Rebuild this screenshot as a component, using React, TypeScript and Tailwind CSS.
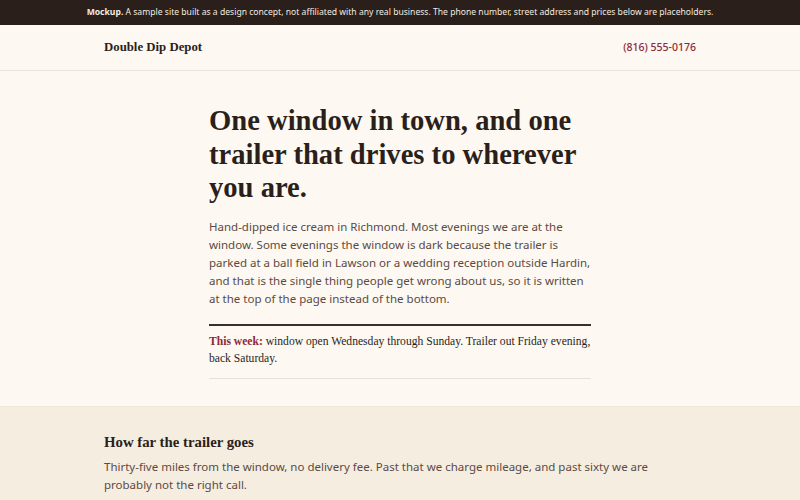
export default function App() {
  return (
    <div className="min-h-screen bg-[#fdf8f1] text-[#2a1f1a] font-['Noto_Sans',sans-serif]">
      <div className="bg-[#2a1f1a] text-[#f3ebe0] text-[8.6px] h-[25px] flex items-center justify-center">
        <p>
          <span className="font-bold">Mockup.</span> A sample site built as a design concept, not affiliated with any real business. The phone number, street address and prices below are placeholders.
        </p>
      </div>

      <header className="border-b border-[#ece4d8] h-[46px]">
        <div className="max-w-[592px] mx-auto h-full flex items-center justify-between">
          <span className="font-['Liberation_Serif',serif] font-bold text-[12.8px]">Double Dip Depot</span>
          <a className="text-[#8b2a3a] text-[10.5px] font-medium">(816) 555-0176</a>
        </div>
      </header>

      <main className="max-w-[382px] mx-auto pt-[33px] pb-[27px]">
        <h1 className="font-['Liberation_Serif',serif] font-bold text-[28.6px] leading-[33.5px]">
          One window in town, and one trailer that drives to wherever you are.
        </h1>
        <p className="mt-[13px] text-[11.5px] leading-[18px] text-[#5a4b43]">
          Hand-dipped ice cream in Richmond. Most evenings we are at the window. Some evenings the window is dark because the trailer is parked at a ball field in Lawson or a wedding reception outside Hardin, and that is the single thing people get wrong about us, so it is written at the top of the page instead of the bottom.
        </p>
        <div className="mt-[16px] border-t-2 border-[#3a2f2a] border-b border-b-[#e9e1d3] pt-[7px] pb-[10px]">
          <p className="font-['Liberation_Serif',serif] text-[11.6px] leading-[17.5px]">
            <span className="text-[#8b2a3a] font-bold">This week:</span> window open Wednesday through Sunday. Trailer out Friday evening, back Saturday.
          </p>
        </div>
      </main>

      <section className="bg-[#f6ede1] border-t border-[#efe6d9] pt-[25px] pb-[20px]">
        <div className="max-w-[592px] mx-auto">
          <h2 className="font-['Liberation_Serif',serif] font-bold text-[14.8px] leading-[20px]">How far the trailer goes</h2>
          <p className="mt-[6px] text-[11.5px] leading-[18px] text-[#5a4b43]">
            Thirty-five miles from the window, no delivery fee. Past that we charge mileage, and past sixty we are probably not the right call.
          </p>
        </div>
      </section>
    </div>
  );
}
